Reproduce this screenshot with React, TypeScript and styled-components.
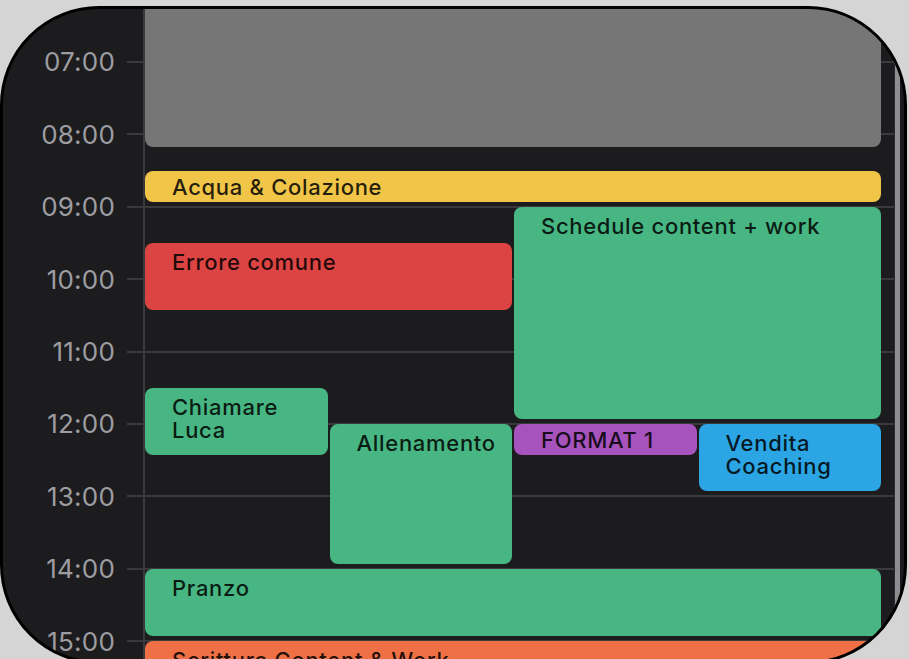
import React from "react";
import styled, { createGlobalStyle } from "styled-components";

const HOUR = 72.4;
const SLOT = HOUR / 12; // 5 minutes
const DAY_START = 6; // grid origin 06:00

const Global = createGlobalStyle`
  html, body {
    margin: 0;
    padding: 0;
    background: #d5d5d5;
    overflow: hidden;
    height: 659px;
  }
  * { box-sizing: border-box; }
`;

const Frame = styled.div`
  position: relative;
  margin-top: 6px;
  width: 907px;
  height: 658px;
  border: 3px solid #000;
  border-radius: 99px;
  background: #1c1c1e;
  overflow: hidden;
`;

const Timeline = styled.div`
  position: relative;
  padding-top: ${53 - HOUR / 2}px;
`;

const HourRow = styled.div`
  display: flex;
  align-items: center;
  height: ${HOUR}px;
`;

const HourLabel = styled.span`
  width: 112px;
  flex: none;
  text-align: right;
  font-family: Inter, "Open Sans", sans-serif;
  font-size: 26px;
  font-weight: 400;
  color: #9c9ca1;
  letter-spacing: 0.2px;
`;

const HourLine = styled.div`
  flex: 1;
  height: 2px;
  margin-left: 12px;
  margin-right: 8px;
  background: #3a3a3d;
`;

const EventLayer = styled.div`
  position: absolute;
  top: ${-(HOUR - 53)}px;
  bottom: 0;
  left: 140px;
  width: 738px;
  border-left: 2px solid #3a3a3d;
`;

const EventGrid = styled.div`
  display: grid;
  grid-template-columns: repeat(4, 1fr);
  grid-template-rows: repeat(132, ${SLOT}px);
  column-gap: 2px;
`;

const Event = styled.div<{ $bg: string; $col: string; $row: string; $short?: boolean }>`
  grid-column: ${(p) => p.$col};
  grid-row: ${(p) => p.$row};
  margin-bottom: 5px;
  border-radius: 8px;
  background: ${(p) => p.$bg};
  padding: ${(p) => (p.$short ? "5px" : "8.5px")} 10px 0 27px;
  font-family: Inter, "Open Sans", sans-serif;
  font-size: 22px;
  font-weight: 500;
  line-height: 23px;
  letter-spacing: 0.7px;
  color: rgba(0, 0, 0, 0.86);
  overflow: hidden;
`;

const ScrollStrip = styled.div`
  position: absolute;
  top: 0;
  bottom: 0;
  right: 4px;
  width: 6px;
  background: #8e8e92;
  border-left: 1px solid #2a2a2c;
`;

type Ev = {
  title: string;
  start: number; // hours
  end: number;
  col: string;
  bg: string;
};

const events: Ev[] = [
  { title: "", start: 6, end: 8.25, col: "1 / 5", bg: "#767676" },
  { title: "Acqua & Colazione", start: 8.5, end: 9, col: "1 / 5", bg: "#f0c548" },
  { title: "Schedule content + work", start: 9, end: 12, col: "3 / 5", bg: "#47b682" },
  { title: "Errore comune", start: 9.5, end: 10.5, col: "1 / 3", bg: "#dc4443" },
  { title: "Chiamare\nLuca", start: 11.5, end: 12.5, col: "1 / 2", bg: "#47b682" },
  { title: "Allenamento", start: 12, end: 14, col: "2 / 3", bg: "#47b682" },
  { title: "FORMAT 1", start: 12, end: 12.5, col: "3 / 4", bg: "#a653bd" },
  { title: "Vendita\nCoaching", start: 12, end: 13, col: "4 / 5", bg: "#2ba5e3" },
  { title: "Pranzo", start: 14, end: 15, col: "1 / 5", bg: "#47b682" },
  { title: "Scrittura Content & Work", start: 15, end: 16.5, col: "1 / 5", bg: "#f07046" },
];

const hours = [7, 8, 9, 10, 11, 12, 13, 14, 15, 16];

const slot = (h: number) => Math.round((h - DAY_START) * 12) + 1;

export default function App() {
  return (
    <>
      <Global />
      <Frame>
        <Timeline>
          {hours.map((h) => (
            <HourRow key={h}>
              <HourLabel>{String(h).padStart(2, "0")}:00</HourLabel>
              <HourLine />
            </HourRow>
          ))}
          <EventLayer>
            <EventGrid>
              {events.map((e, i) => (
                <Event
                  key={i}
                  $bg={e.bg}
                  $col={e.col}
                  $row={`${slot(e.start)} / ${slot(e.end)}`}
                  $short={e.end - e.start <= 0.5}
                >
                  {e.title.split("\n").map((l, j) => (
                    <div key={j}>{l}</div>
                  ))}
                </Event>
              ))}
            </EventGrid>
          </EventLayer>
        </Timeline>
        <ScrollStrip />
      </Frame>
    </>
  );
}
